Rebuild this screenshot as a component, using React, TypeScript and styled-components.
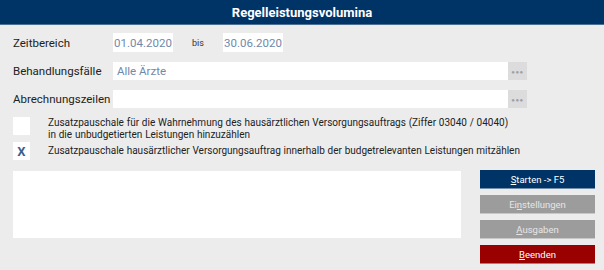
import React from "react";
import styled, { createGlobalStyle } from "styled-components";

const Global = createGlobalStyle`
  html, body { margin: 0; padding: 0; background: #ececec; }
  body { font-family: Roboto, "Liberation Sans", sans-serif; }
  * { box-sizing: border-box; }
`;

const Page = styled.div`
  width: 604px;
  height: 270px;
  background: #ececec;
  display: flex;
  flex-direction: column;
`;

const Header = styled.div`
  height: 25px;
  flex: none;
  background: #003366;
  border-bottom: 1px solid #4d6f93;
  color: #fff;
  font-weight: 700;
  font-size: 13px;
  display: flex;
  align-items: center;
  justify-content: center;
`;

const Body = styled.div`
  padding: 8px 9px 0 13px;
  display: flex;
  flex-direction: column;
`;

const Row = styled.div<{ $h: number; $mt?: number }>`
  display: flex;
  align-items: center;
  height: ${(p) => p.$h}px;
  margin-top: ${(p) => p.$mt ?? 0}px;
`;

const Label = styled.div`
  width: 100px;
  font-size: 11.5px;
  color: #222;
`;

const DateBox = styled.div`
  width: 60px;
  height: 19px;
  background: #fff;
  color: #7089ab;
  font-size: 11.5px;
  display: flex;
  align-items: center;
  justify-content: center;
`;

const Bis = styled.div`
  width: 50px;
  text-align: center;
  font-size: 9px;
  color: #333;
`;

const Field = styled.div`
  width: 395px;
  height: 18px;
  background: #fff;
  color: #7089ab;
  font-size: 11.5px;
  display: flex;
  align-items: center;
  padding-left: 4px;
`;

const DotsBtn = styled.div`
  width: 19px;
  height: 18px;
  background: #dcdcdc;
  color: #a0a0a0;
  font-size: 6px;
  display: flex;
  align-items: center;
  justify-content: center;
  letter-spacing: 0.5px;
`;

const CheckRow = styled.div<{ $mt: number; $h: number }>`
  display: flex;
  align-items: flex-start;
  height: ${(p) => p.$h}px;
  margin-top: ${(p) => p.$mt}px;
`;

const Box = styled.div`
  width: 17px;
  height: 18px;
  background: #fff;
  flex: none;
  display: flex;
  align-items: center;
  justify-content: center;
  color: #3b5f8f;
  font-weight: 700;
  font-size: 13px;
`;

const CheckText = styled.div<{ $top: number }>`
  margin-left: 18px;
  margin-top: ${(p) => p.$top}px;
  font-size: 10px;
  line-height: 12px;
  color: #222;
  word-spacing: 0.3px;
`;

const Bottom = styled.div`
  display: flex;
  margin-top: 11px;
`;

const Area = styled.div`
  width: 448px;
  height: 67px;
  background: #fff;
`;

const Buttons = styled.div`
  margin-left: 19px;
  margin-top: -1px;
  display: flex;
  flex-direction: column;
  gap: 6px;
`;

const Btn = styled.div<{ $bg: string; $fg: string }>`
  width: 115px;
  height: 19px;
  background: ${(p) => p.$bg};
  color: ${(p) => p.$fg};
  font-size: 9.5px;
  display: flex;
  align-items: center;
  justify-content: center;
  border-bottom: 1px solid rgba(255,255,255,0.45);
`;

export default function App() {
  return (
    <Page>
      <Global />
      <Header>Regelleistungsvolumina</Header>
      <Body>
        <Row $h={19}>
          <Label>Zeitbereich</Label>
          <DateBox>01.04.2020</DateBox>
          <Bis>bis</Bis>
          <DateBox>30.06.2020</DateBox>
        </Row>
        <Row $h={18} $mt={10}>
          <Label>Behandlungsfälle</Label>
          <Field>Alle Ärzte</Field>
          <DotsBtn>●●●</DotsBtn>
        </Row>
        <Row $h={18} $mt={10}>
          <Label>Abrechnungszeilen</Label>
          <Field />
          <DotsBtn>●●●</DotsBtn>
        </Row>
        <CheckRow $mt={9} $h={18}>
          <Box />
          <CheckText $top={0}>
            Zusatzpauschale für die Wahrnehmung des hausärztlichen Versorgungsauftrags (Ziffer 03040 / 04040)
            <br />
            in die unbudgetierten Leistungen hinzuzählen
          </CheckText>
        </CheckRow>
        <CheckRow $mt={7} $h={18}>
          <Box>X</Box>
          <CheckText $top={3}>
            Zusatzpauschale hausärztlicher Versorgungsauftrag innerhalb der budgetrelevanten Leistungen mitzählen
          </CheckText>
        </CheckRow>
        <Bottom>
          <Area />
          <Buttons>
            <Btn $bg="#003366" $fg="#fff"><span><u>S</u>tarten -&gt; F5</span></Btn>
            <Btn $bg="#9c9c9c" $fg="#e6e6e6"><span>Ei<u>n</u>stellungen</span></Btn>
            <Btn $bg="#9c9c9c" $fg="#e6e6e6"><span><u>A</u>usgaben</span></Btn>
            <Btn $bg="#990000" $fg="#fff"><span><u>B</u>eenden</span></Btn>
          </Buttons>
        </Bottom>
      </Body>
    </Page>
  );
}
